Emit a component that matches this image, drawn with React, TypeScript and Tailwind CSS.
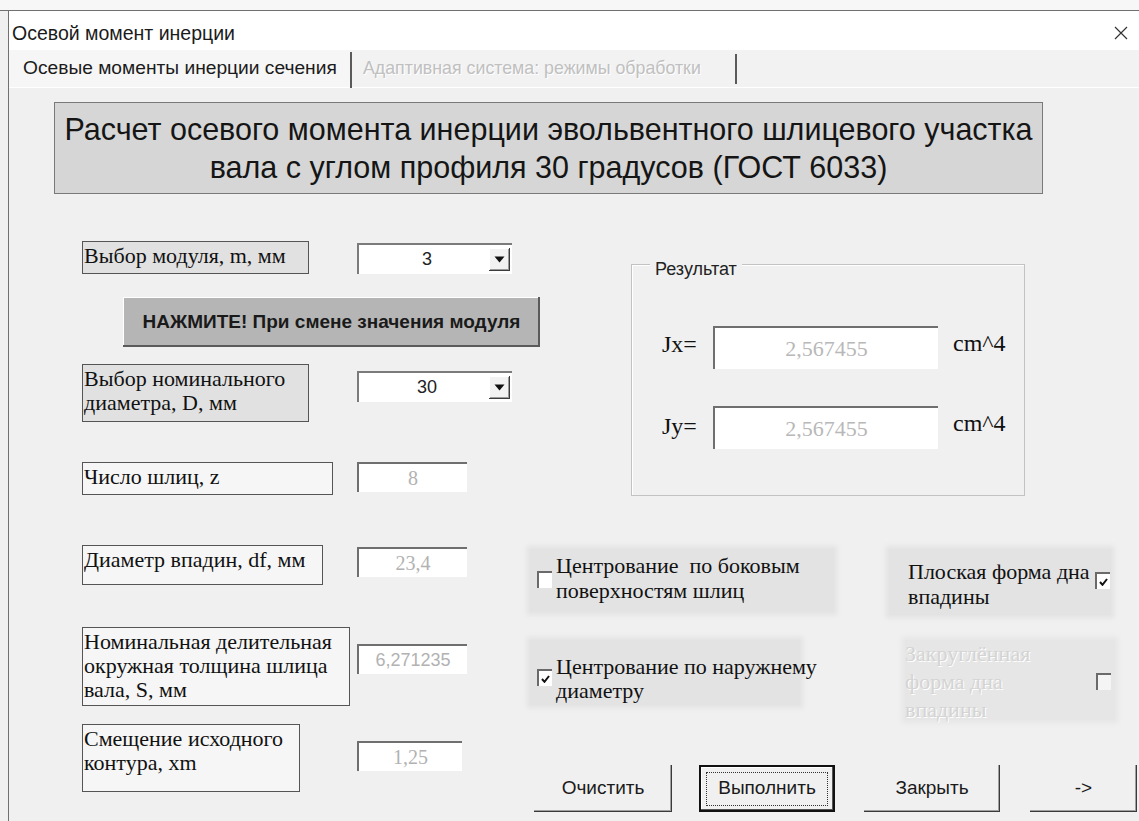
import React from "react"

const sans = "font-['Liberation_Sans',Arial,sans-serif]"
const serif = "font-['Liberation_Serif','Times_New_Roman',serif]"

function LabelBox({ w, h, gray, children }: { w: string; h: string; gray?: boolean; children: React.ReactNode }) {
  return (
    <div
      className={`${w} ${h} ${gray ? "bg-[#e1e1e1]" : "bg-[#f6f6f6]"} border border-[#555] ${serif} text-[22px] leading-[24px] text-[#111] pl-[1px] pt-[2px]`}
    >
      {children}
    </div>
  )
}

function Combo({ value, top }: { value: string; top: string }) {
  return (
    <div className={`${top} w-[155px] h-[31px] bg-white border-t-2 border-l-2 border-[#7b7b7b] flex items-center`}>
      <span className={`flex-1 text-center ${sans} text-[18px] text-[#222] pl-[6px]`}>{value}</span>
      <div className="w-[21px] h-[23px] mr-[2px] bg-[#f2f2f2] shadow-[inset_-1px_-1px_0_#3c3c3c,inset_1px_1px_0_#fff,inset_-2px_-2px_0_#9a9a9a] flex items-center justify-center">
        <svg width="11" height="7" viewBox="0 0 11 7" className="-mt-[1px]">
          <path d="M0.5 0.5 L10.5 0.5 L5.5 6.5 Z" fill="#111" />
        </svg>
      </div>
    </div>
  )
}

function Field({ value, top, w = "w-[110px]", font }: { value: string; top: string; w?: string; font: string }) {
  return (
    <div className={`${top} ${w} h-[30px] bg-white border-t-2 border-l-2 border-[#6f6f6f] flex items-center justify-center text-[#b2b2b2] ${font}`}>
      {value}
    </div>
  )
}

function Box({ checked, disabled }: { checked?: boolean; disabled?: boolean }) {
  return (
    <div
      className={`w-[15px] h-[17px] shrink-0 ${disabled ? "bg-[#f4f4f4]" : "bg-white"} border-t-2 border-l-2 border-[#6a6a6a] flex items-center justify-center`}
    >
      {checked && (
        <svg width="9" height="8" viewBox="0 0 9 8">
          <path d="M1 4 L3.5 6.8 L8 1" stroke="#111" strokeWidth="2" fill="none" />
        </svg>
      )}
    </div>
  )
}

function Btn({ label, w, isDefault }: { label: string; w: string; isDefault?: boolean }) {
  return (
    <div
      className={`${w} h-[47px] bg-[#f0f0f0] flex items-center justify-center ${sans} text-[19px] text-[#1a1a1a] ${
        isDefault
          ? "border-2 border-[#111] shadow-[inset_-1px_-1px_0_#555,inset_1px_1px_0_#fff]"
          : "shadow-[inset_-1px_-1px_0_#3a3a3a,inset_-2px_-2px_0_#a0a0a0]"
      }`}
    >
      {isDefault ? (
        <div className="w-[122px] h-[34px] border border-dotted border-[#333] flex items-center justify-center">{label}</div>
      ) : (
        label
      )}
    </div>
  )
}

export default function App() {
  return (
    <div className="w-[1139px] h-[821px] overflow-hidden bg-[#f0f0f0] flex flex-col">
      {/* strip of the window behind */}
      <div className="h-[11px] shrink-0 bg-[#f7f7f7] border-b border-[#707070]" />

      <div className="flex-1 ml-[8px] border-l border-[#707070] flex flex-col">
        {/* caption */}
        <div className="h-[39px] shrink-0 bg-white flex items-center justify-between pl-[3px] pr-[10px] pt-[7px]">
          <span className={`${sans} text-[19.5px] text-[#1b1b1b]`}>Осевой момент инерции</span>
          <svg width="16" height="16" viewBox="0 0 16 16" className="mt-[-2px]">
            <path d="M2 2 L14 14 M14 2 L2 14" stroke="#333" strokeWidth="1.2" />
          </svg>
        </div>

        {/* tabs */}
        <div className="h-[38px] shrink-0 bg-[#f2f2f2] border-b border-white flex items-center">
          <div className="w-[341px] h-full flex items-center pl-[14px] bg-[#f6f6f6]">
            <span className={`${sans} text-[19.2px] text-[#1b1b1b]`}>Осевые моменты инерции сечения</span>
          </div>
          <div className="w-[2px] h-[36px] bg-[#5a5a5a] mt-[2px]" />
          <div className="w-[383px] h-full flex items-center pl-[11px]">
            <span className={`${sans} text-[17.8px] text-[#c0c0c0] [text-shadow:1px_1px_0_#fff]`}>
              Адаптивная система: режимы обработки
            </span>
          </div>
          <div className="w-[2px] h-[30px] bg-[#5a5a5a]" />
        </div>

        {/* page */}
        <div className="flex-1 flex flex-col">
          <div
            className={`mt-[14px] ml-[45px] w-[989px] h-[92px] shrink-0 bg-[#d6d6d6] border border-[#7a7a7a] flex flex-col items-center justify-center ${sans} text-[30.5px] leading-[38px] text-[#151515]`}
          >
            <span>Расчет осевого момента инерции эвольвентного шлицевого участка</span>
            <span>вала с углом профиля 30 градусов (ГОСТ 6033)</span>
          </div>

          <div className="flex">
            {/* inputs */}
            <div className="ml-[73px] w-[448px] shrink-0 flex flex-col">
              <div className="mt-[47px] flex">
                <div className="w-[275px]">
                  <LabelBox w="w-[227px]" h="h-[33px]" gray>
                    Выбор модуля, m, мм
                  </LabelBox>
                </div>
                <Combo value="3" top="mt-[2px]" />
              </div>

              <div
                className={`mt-[23px] ml-[41px] w-[417px] h-[50px] bg-[#b5b5b5] shadow-[inset_-2px_-2px_0_#5a5a5a,inset_1px_1px_0_#fff] flex items-center justify-center ${sans} font-bold text-[19px] text-[#1a1a1a]`}
              >
                НАЖМИТЕ! При смене значения модуля
              </div>

              <div className="mt-[17px] flex">
                <div className="w-[275px]">
                  <LabelBox w="w-[227px]" h="h-[58px]" gray>
                    Выбор номинального
                    <br />
                    диаметра, D, мм
                  </LabelBox>
                </div>
                <Combo value="30" top="mt-[7px]" />
              </div>

              <div className="mt-[40px] flex">
                <div className="w-[275px]">
                  <LabelBox w="w-[251px]" h="h-[33px]">
                    Число шлиц, z
                  </LabelBox>
                </div>
                <Field value="8" top="mt-0" font={`${serif} text-[20px]`} />
              </div>

              <div className="mt-[50px] flex">
                <div className="w-[275px]">
                  <LabelBox w="w-[241px]" h="h-[40px]">
                    Диаметр впадин, df, мм
                  </LabelBox>
                </div>
                <Field value="23,4" top="mt-[2px]" font={`${serif} text-[20px]`} />
              </div>

              <div className="mt-[42px] flex">
                <div className="w-[275px]">
                  <LabelBox w="w-[268px]" h="h-[79px]">
                    Номинальная делительная
                    <br />
                    окружная толщина шлица
                    <br />
                    вала, S, мм
                  </LabelBox>
                </div>
                <Field value="6,271235" top="mt-[17px]" font={`${sans} text-[18px]`} />
              </div>

              <div className="mt-[18px] flex">
                <div className="w-[275px]">
                  <LabelBox w="w-[218px]" h="h-[68px]">
                    Смещение исходного
                    <br />
                    контура, xm
                  </LabelBox>
                </div>
                <Field value="1,25" top="mt-[17px]" w="w-[105px]" font={`${serif} text-[20px]`} />
              </div>
            </div>

            {/* result and options */}
            <div className="flex-1 flex flex-col">
              <div className="relative mt-[70px] ml-[101px] w-[394px] h-[232px] border border-[#c2c2c2] shadow-[inset_1px_1px_0_#fff] pl-[30px]">
                <span className={`absolute -top-[6px] left-[18px] px-[5px] leading-[20px] bg-[#f0f0f0] ${sans} text-[18px] text-[#222]`}>
                  Результат
                </span>
                <div className="mt-[61px] flex items-center">
                  <span className={`w-[51px] ${serif} text-[24px] text-[#111] -mt-[8px]`}>Jx=</span>
                  <div className={`w-[225px] h-[43px] bg-white border-t-2 border-l-2 border-[#6f6f6f] flex items-center justify-center ${serif} text-[22px] text-[#b8b8b8]`}>
                    2,567455
                  </div>
                  <span className={`ml-[15px] ${serif} text-[24px] text-[#111] -mt-[10px]`}>cm^4</span>
                </div>
                <div className="mt-[37px] flex items-center">
                  <span className={`w-[51px] ${serif} text-[24px] text-[#111] -mt-[4px]`}>Jy=</span>
                  <div className={`w-[225px] h-[43px] bg-white border-t-2 border-l-2 border-[#6f6f6f] flex items-center justify-center ${serif} text-[22px] text-[#b8b8b8]`}>
                    2,567455
                  </div>
                  <span className={`ml-[15px] ${serif} text-[24px] text-[#111] -mt-[10px]`}>cm^4</span>
                </div>
              </div>

              <div className={`mt-[53px] flex ${serif} text-[22px] leading-[25px] text-[#111]`}>
                <div className="w-[304px] h-[63px] bg-[#e3e3e3] shadow-[0_0_5px_3px_#e3e3e3] flex pl-[7px] pt-[4px]">
                  <div className="mt-[18px]">
                    <Box />
                  </div>
                  <div className="ml-[4px] whitespace-nowrap">
                    Центрование&nbsp; по боковым
                    <br />
                    поверхностям шлиц
                  </div>
                </div>
                <div className="ml-[55px] w-[222px] h-[66px] bg-[#e3e3e3] shadow-[0_0_5px_3px_#e3e3e3] flex pl-[19px] pt-[10px]">
                  <div className="flex-1 whitespace-nowrap">
                    Плоская форма дна
                    <br />
                    впадины
                  </div>
                  <div className="mt-[13px] mr-[1px]">
                    <Box checked />
                  </div>
                </div>
              </div>

              <div className={`mt-[25px] flex ${serif} text-[22px] leading-[24px] text-[#111]`}>
                <div className="w-[270px] h-[65px] bg-[#e3e3e3] shadow-[0_0_5px_3px_#e3e3e3] flex pl-[7px] pt-[15px]">
                  <div className="mt-[14px]">
                    <Box checked />
                  </div>
                  <div className="ml-[4px] whitespace-nowrap">
                    Центрование по наружнему
                    <br />
                    диаметру
                  </div>
                </div>
                <div className="ml-[105px] w-[210px] h-[80px] bg-[#e6e6e6] shadow-[0_0_5px_3px_#e6e6e6] flex">
                  <div className="flex-1 leading-[28px] text-[#d4d4d4] [text-shadow:1px_1px_0_#fff]">
                    Закруглённая
                    <br />
                    форма дна
                    <br />
                    впадины
                  </div>
                  <div className="mt-[33px] mr-[4px]">
                    <Box disabled />
                  </div>
                </div>
              </div>

              <div className="mt-[45px] ml-[4px] flex">
                <Btn label="Очистить" w="w-[138px]" />
                <div className="ml-[27px]">
                  <Btn label="Выполнить" w="w-[136px]" isDefault />
                </div>
                <div className="ml-[29px]">
                  <Btn label="Закрыть" w="w-[136px]" />
                </div>
                <div className="ml-[30px]">
                  <Btn label="->" w="w-[107px]" />
                </div>
              </div>
            </div>
          </div>
        </div>
      </div>
    </div>
  )
}
